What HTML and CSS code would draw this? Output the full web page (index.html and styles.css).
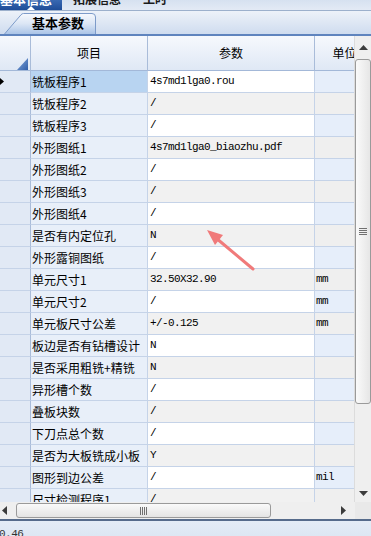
FILE: index.html
```html
<!DOCTYPE html>
<html lang="zh-CN">
<head>
    <meta charset="UTF-8">
    <meta name="viewport" content="width=device-width, initial-scale=1.0">
    <title>基本参数</title>
    <link rel="stylesheet" href="styles.css">
</head>
<body>
    <div class="topbar">
        <div class="toptab selected">基本信息</div>
        <div class="toptab">拓展信息</div>
        <div class="toptab">工时</div>
    </div>

    <div class="subbar">
        <div class="subtab">
            <svg class="subtab-bg" width="92" height="21" viewBox="0 0 92 21">
                <defs>
                    <linearGradient id="tabfill" x1="0" y1="0" x2="0" y2="1">
                        <stop offset="0" stop-color="#f7f9fd"/>
                        <stop offset="0.5" stop-color="#dbe6f5"/>
                        <stop offset="1" stop-color="#aac4e7"/>
                    </linearGradient>
                </defs>
                <path d="M0.5 21 L17 1.8 Q18 0.5 19.5 0.5 L88 0.5 Q91.5 0.5 91.5 4 L91.5 21" fill="url(#tabfill)" stroke="#7d9bc9"/>
            </svg>
            <span class="subtab-label">基本参数</span>
        </div>
    </div>

    <div class="grid-wrap">
        <div class="grid">
            <div class="row head">
                <div class="corner">
                    <svg width="11" height="12" viewBox="0 0 11 12">
                        <defs>
                            <linearGradient id="tri" x1="0" y1="0" x2="1" y2="1">
                                <stop offset="0" stop-color="#86a9dc"/>
                                <stop offset="1" stop-color="#2f5ea9"/>
                            </linearGradient>
                        </defs>
                        <polygon points="11,0 11,12 0,12" fill="url(#tri)"/>
                    </svg>
                </div>
                <div>项目</div>
                <div>参数</div>
                <div>单位</div>
            </div>

            <div class="row current">
                <div class="rh"><svg class="pointer" width="5" height="9" viewBox="0 0 5 9"><polygon points="0,0 5,4.5 0,9" fill="#000"/></svg></div>
                <div class="name">铣板程序1</div><div class="val">4s7md1lga0.rou</div><div class="unit"></div>
            </div>
            <div class="row"><div class="rh"></div><div class="name">铣板程序2</div><div class="val">/</div><div class="unit"></div></div>
            <div class="row"><div class="rh"></div><div class="name">铣板程序3</div><div class="val">/</div><div class="unit"></div></div>
            <div class="row"><div class="rh"></div><div class="name">外形图纸1</div><div class="val">4s7md1lga0_biaozhu.pdf</div><div class="unit"></div></div>
            <div class="row"><div class="rh"></div><div class="name">外形图纸2</div><div class="val">/</div><div class="unit"></div></div>
            <div class="row"><div class="rh"></div><div class="name">外形图纸3</div><div class="val">/</div><div class="unit"></div></div>
            <div class="row"><div class="rh"></div><div class="name">外形图纸4</div><div class="val">/</div><div class="unit"></div></div>
            <div class="row"><div class="rh"></div><div class="name">是否有内定位孔</div><div class="val">N</div><div class="unit"></div></div>
            <div class="row"><div class="rh"></div><div class="name">外形露铜图纸</div><div class="val">/</div><div class="unit"></div></div>
            <div class="row"><div class="rh"></div><div class="name">单元尺寸1</div><div class="val">32.50X32.90</div><div class="unit">mm</div></div>
            <div class="row"><div class="rh"></div><div class="name">单元尺寸2</div><div class="val">/</div><div class="unit">mm</div></div>
            <div class="row"><div class="rh"></div><div class="name">单元板尺寸公差</div><div class="val">+/-0.125</div><div class="unit">mm</div></div>
            <div class="row"><div class="rh"></div><div class="name">板边是否有钻槽设计</div><div class="val">N</div><div class="unit"></div></div>
            <div class="row"><div class="rh"></div><div class="name">是否采用粗铣+精铣</div><div class="val">N</div><div class="unit"></div></div>
            <div class="row"><div class="rh"></div><div class="name">异形槽个数</div><div class="val">/</div><div class="unit"></div></div>
            <div class="row"><div class="rh"></div><div class="name">叠板块数</div><div class="val">/</div><div class="unit"></div></div>
            <div class="row"><div class="rh"></div><div class="name">下刀点总个数</div><div class="val">/</div><div class="unit"></div></div>
            <div class="row"><div class="rh"></div><div class="name">是否为大板铣成小板</div><div class="val">Y</div><div class="unit"></div></div>
            <div class="row"><div class="rh"></div><div class="name">图形到边公差</div><div class="val">/</div><div class="unit">mil</div></div>
            <div class="row"><div class="rh"></div><div class="name">尺寸检测程序1</div><div class="val">/</div><div class="unit"></div></div>
        </div>

        <div class="vscroll">
            <div class="vbtn"><svg width="9" height="5" viewBox="0 0 9 5"><polygon points="0,5 4.5,0 9,5" fill="#3c3c3c"/></svg></div>
            <div class="vthumb"><span class="grip-h"></span></div>
            <div class="fill"></div>
            <div class="vbtn"><svg width="9" height="5" viewBox="0 0 9 5"><polygon points="0,0 4.5,5 9,0" fill="#3c3c3c"/></svg></div>
        </div>
    </div>

    <div class="hscroll">
        <div class="hbar">
            <div class="hbtn left"><svg width="5" height="9" viewBox="0 0 5 9"><polygon points="5,0 0,4.5 5,9" fill="#3c3c3c"/></svg></div>
            <div class="hthumb"><span class="grip-v"></span></div>
            <div class="fill"></div>
            <div class="hbtn right"><svg width="5" height="9" viewBox="0 0 5 9"><polygon points="0,0 5,4.5 0,9" fill="#3c3c3c"/></svg></div>
        </div>
        <div class="scroll-corner"></div>
    </div>

    <div class="status">0.46</div>

    <!-- seta vermelha de anotação -->
    <svg class="mark" width="371" height="536" viewBox="0 0 371 536">
        <line x1="253" y1="269" x2="216" y2="238" stroke="#f07a7a" stroke-width="3" stroke-linecap="round"/>
        <polygon points="207,230 223,235 215,245" fill="#f07a7a"/>
    </svg>
</body>
</html>
```

FILE: styles.css
```css
html, body {
    margin: 0;
    padding: 0;
}

body {
    position: relative;
    width: 371px;
    height: 536px;
    overflow: hidden;
    background-color: #dfe8f4;
    font-family: "Noto Sans CJK SC", "Liberation Sans", sans-serif;
    font-size: 12px;
    color: #000;
}

/* abas de cima (cortadas) */
.topbar {
    display: flex;
    align-items: flex-start;
    height: 10px;
    overflow: hidden;
    background: linear-gradient(#d6e1f0, #e3eaf5);
    border-bottom: 1px solid #9cb0cc;
}

.toptab {
    position: relative;
    margin-top: -7px;
    height: 17px;
    line-height: 12px;
    margin-right: 22px;
    font-weight: bold;
    color: #1a1a1a;
}

.toptab.selected {
    width: 62px;
    margin-right: 11px;
    font-size: 13px;
    color: #fff;
    background: linear-gradient(#4b7cc4, #1f4d98);
}

.toptab.selected::after {
    content: "";
    position: absolute;
    left: 27px;
    bottom: 0;
    border-left: 4px solid transparent;
    border-right: 4px solid transparent;
    border-bottom: 4px solid #fff;
}

/* aba "基本参数" */
.subbar {
    display: flex;
    align-items: flex-end;
    height: 23px;
    background: linear-gradient(#edf2f9, #cfdcef);
    border-bottom: 2px solid #5f84be;
}

.subtab {
    position: relative;
    width: 92px;
    height: 21px;
    margin-left: 4px;
}

.subtab-bg {
    position: absolute;
    left: 0;
    top: 0;
}

.subtab-label {
    position: relative;
    display: block;
    padding-left: 28px;
    line-height: 20px;
    font-size: 13px;
    font-weight: bold;
}

/* grade */
.grid-wrap {
    display: flex;
    height: 466px;
}

.grid {
    width: 355px;
    overflow: hidden;
    background-color: #fff;
}

.row {
    display: grid;
    grid-template-columns: 31px 117px 167px 60px;
    height: 22px;
}

.row > div {
    box-sizing: border-box;
    border-right: 1px solid #c5d3e8;
    border-bottom: 1px solid #c5d3e8;
    line-height: 21px;
    white-space: nowrap;
    overflow: hidden;
}

.row.head {
    height: 35px;
}

.row.head > div {
    display: flex;
    align-items: center;
    justify-content: center;
    line-height: 34px;
    background: linear-gradient(#f6f9fd, #dfe8f5);
    border-right-color: #a9bcd9;
    border-bottom-color: #a3b8d8;
}

.row.head > .corner {
    align-items: flex-end;
    justify-content: flex-end;
    padding: 0 2px 0 0;
}

.corner svg {
    display: block;
}

.rh {
    background-color: #e1e9f5;
    border-right-color: #a9bcd9 !important;
}

.pointer {
    display: block;
    margin: 6px 0 0 -1px;
}

.name {
    padding-left: 1px;
    background-color: #e8eff9;
}

.current .name {
    background-color: #b8d4f1;
}

.val {
    padding-left: 2px;
    font-family: "Liberation Mono", "DejaVu Sans Mono", monospace;
    font-size: 11px;
    letter-spacing: -0.6px;
    color: #000;
    background-color: #fff;
}

.unit {
    padding-left: 1px;
    font-family: "Liberation Mono", "DejaVu Sans Mono", monospace;
    font-size: 11px;
    letter-spacing: -0.6px;
    color: #000;
    background-color: #e6eefa;
}

.row:nth-child(odd) .val {
    background-color: #f1f1f1;
}

.row:nth-child(odd) .unit {
    background-color: #efefef;
}

/* barras de rolagem */
.vscroll {
    display: flex;
    flex-direction: column;
    width: 16px;
    background-color: #efefef;
    border-left: 1px solid #dcdcdc;
}

.vbtn {
    display: flex;
    align-items: center;
    justify-content: center;
    height: 23px;
}

.vbtn:last-child {
    height: 17px;
}

.vbtn svg, .hbtn svg {
    display: block;
}

.vthumb {
    display: flex;
    align-items: center;
    justify-content: center;
    box-sizing: border-box;
    height: 345px;
    width: 16px;
    border: 1px solid #9a9a9a;
    border-radius: 3px;
    background: linear-gradient(90deg, #fafafa, #e6e6e6);
}

.grip-h {
    width: 8px;
    height: 7px;
    background: repeating-linear-gradient(#707070 0 1px, transparent 1px 2px);
}

.fill {
    flex: 1;
}

.hscroll {
    display: flex;
    height: 17px;
    background-color: #efefef;
}

.hbar {
    display: flex;
    align-items: center;
    width: 355px;
}

.hbtn.left {
    width: 16px;
    padding-left: 2px;
    box-sizing: border-box;
}

.hbtn.right {
    width: 14px;
}

.hthumb {
    display: flex;
    align-items: center;
    justify-content: center;
    box-sizing: border-box;
    width: 255px;
    height: 15px;
    border: 1px solid #9a9a9a;
    border-radius: 3px;
    background: linear-gradient(#fafafa, #e4e4e4);
}

.grip-v {
    width: 7px;
    height: 8px;
    background: repeating-linear-gradient(90deg, #707070 0 1px, transparent 1px 2px);
}

.scroll-corner {
    width: 16px;
    background-color: #e9e9e9;
}

/* barra de status */
.status {
    height: 15px;
    border-top: 2px solid #566b8b;
    background: linear-gradient(#e4ecf6, #d9e4f2);
    padding: 7px 0 0 0;
    margin-left: -1px;
    line-height: 12px;
    font-family: "Liberation Mono", monospace;
    font-size: 11px;
    letter-spacing: -0.5px;
    color: #333;
}

.mark {
    position: absolute;
    left: 0;
    top: 0;
    pointer-events: none;
}
```
